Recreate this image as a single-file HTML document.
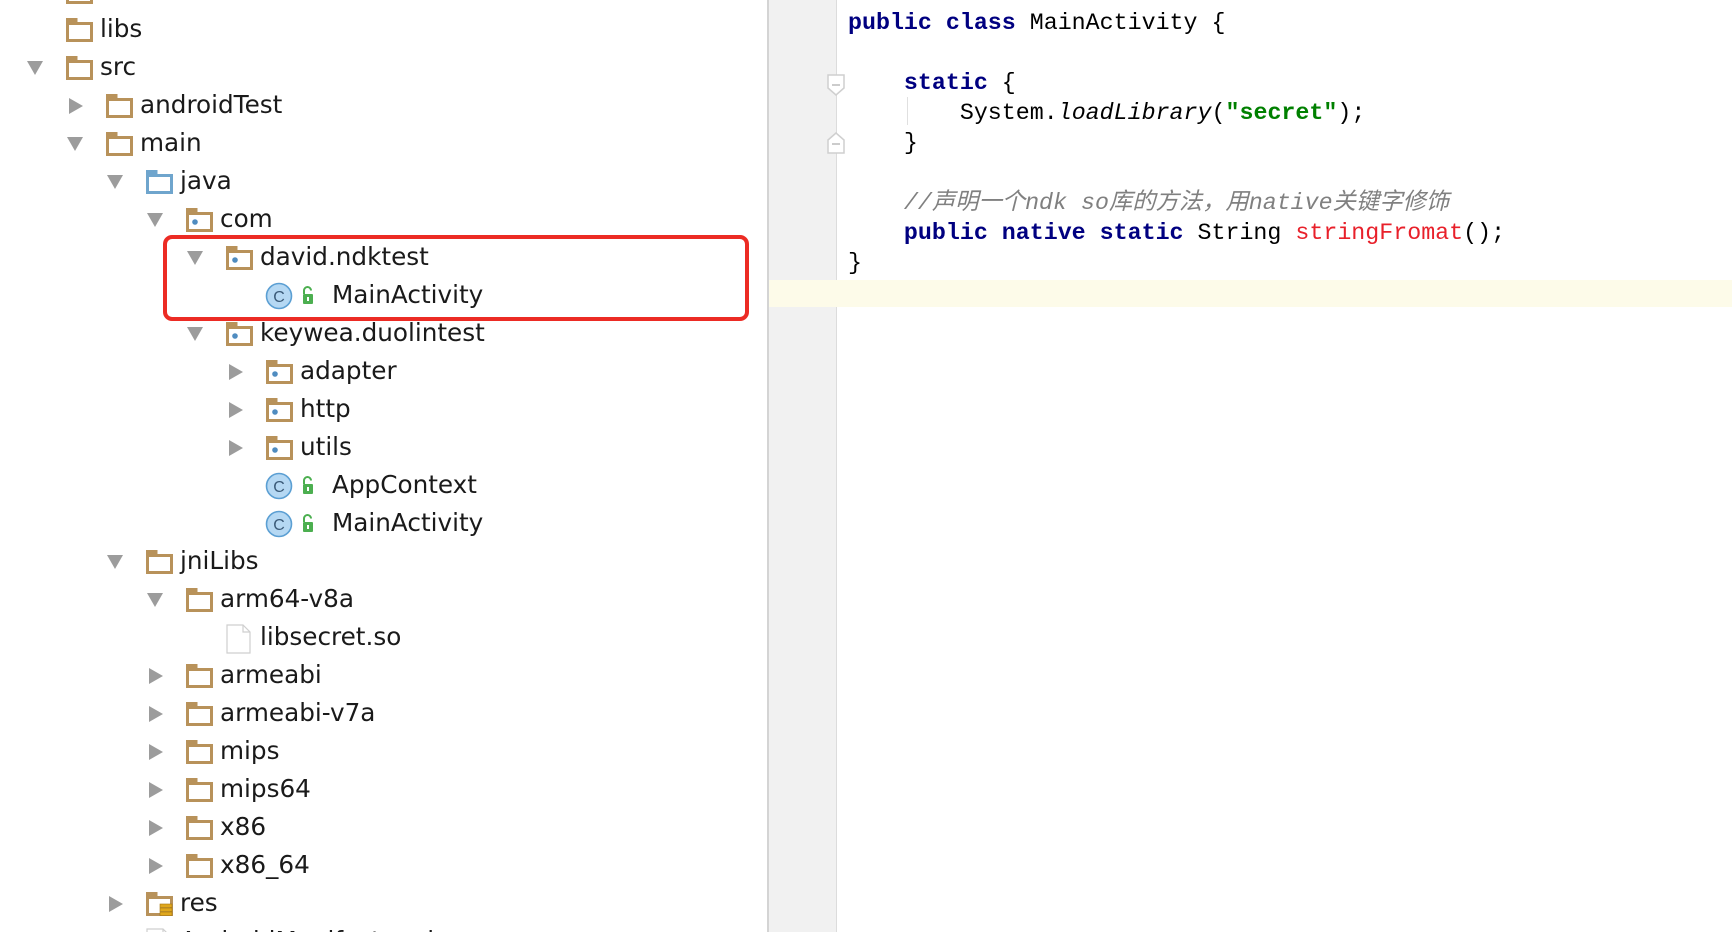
<!DOCTYPE html>
<html style="overflow:hidden"><head><meta charset="utf-8"><style>
html,body{margin:0;width:1732px;height:932px;overflow:hidden}
#w{position:relative;width:1732px;height:932px;overflow:hidden;background:#fff;font-family:"DejaVu Sans","Noto Sans CJK SC",sans-serif}
.r{position:absolute;height:38px;line-height:38px;font-size:24.7px;color:#1a1a1a;white-space:nowrap}
.t{position:absolute;width:0;height:0}
.t.o{border-left:8px solid transparent;border-right:8px solid transparent;border-top:14px solid #9c9c9c}
.t.c{border-top:8px solid transparent;border-bottom:8px solid transparent;border-left:14px solid #9c9c9c}
.ic{position:absolute}
.code{position:absolute;left:848px;font-family:"Liberation Mono","Noto Sans CJK SC",monospace;font-size:23.3px;white-space:pre;line-height:30px;color:#000}
.k{color:#000080;font-weight:bold}
.s{color:#008000;font-weight:bold}
.cm{color:#808080;font-style:italic}
.m{color:#e8202a}
</style></head><body><div id="w">
<div style="position:absolute;left:767px;top:0;width:2px;height:932px;background:#d4d4d4"></div>
<div style="position:absolute;left:769px;top:0;width:67px;height:932px;background:#f1f1f1"></div>
<div style="position:absolute;left:836px;top:0;width:1px;height:932px;background:#dcdcdc"></div>
<div style="position:absolute;left:769px;top:280px;width:963px;height:27px;background:#fdfbe9"></div>
<svg class="ic" style="left:827px;top:74px" width="18" height="22"><path d="M1 1H17V14L9 21L1 14Z" fill="#fff" stroke="#cfcfcf" stroke-width="1.5"/><path d="M5 11H13" stroke="#bbb" stroke-width="1.5"/></svg>
<svg class="ic" style="left:827px;top:132px" width="18" height="22"><path d="M1 21H17V8L9 1L1 8Z" fill="#fff" stroke="#cfcfcf" stroke-width="1.5"/><path d="M5 12H13" stroke="#bbb" stroke-width="1.5"/></svg>
<div style="position:absolute;left:907px;top:97px;width:1px;height:28px;background:#e0e0e0"></div>
<div class="code" style="top:8px"><span class="k">public class</span> MainActivity {</div>
<div class="code" style="top:68px">    <span class="k">static</span> {</div>
<div class="code" style="top:98px">        System.<i>loadLibrary</i>(<span class="s">"secret"</span>);</div>
<div class="code" style="top:128px">    }</div>
<div class="code" style="top:188px">    <span class="cm">//声明一个ndk so库的方法，用native关键字修饰</span></div>
<div class="code" style="top:218px">    <span class="k">public native static</span> String <span class="m">stringFromat</span>();</div>
<div class="code" style="top:248px">}</div>

<div style="position:absolute;left:163px;top:235px;width:578px;height:78px;border:4px solid #ec2b24;border-radius:9px"></div>

<div id="tree"></div>
</div>
<script>
var rows=[[-1,0,'f','',0],[0,0,'f','libs',0],[1,0,'f','src','o'],[2,1,'f','androidTest','c'],[3,1,'f','main','o'],[4,2,'j','java','o'],[5,3,'p','com','o'],[6,4,'p','david.ndktest','o'],[7,5,'C','MainActivity',0],[8,4,'p','keywea.duolintest','o'],[9,5,'p','adapter','c'],[10,5,'p','http','c'],[11,5,'p','utils','c'],[12,5,'C','AppContext',0],[13,5,'C','MainActivity',0],[14,2,'f','jniLibs','o'],[15,3,'f','arm64-v8a','o'],[16,4,'d','libsecret.so',0],[17,3,'f','armeabi','c'],[18,3,'f','armeabi-v7a','c'],[19,3,'f','mips','c'],[20,3,'f','mips64','c'],[21,3,'f','x86','c'],[22,3,'f','x86_64','c'],[23,2,'r','res','c'],[24,2,'d','AndroidManifest.xml','c']];
var h='';
rows.forEach(function(r){
var i=r[0],L=r[1],ty=r[2],cy=30+38*i,fx=66+40*L,tx=100+40*L;
if(r[4]=='o')h+='<div class="t o" style="left:'+(27+40*L)+'px;top:'+(cy-7)+'px"></div>';
if(r[4]=='c')h+='<div class="t c" style="left:'+(29+40*L)+'px;top:'+(cy-8)+'px"></div>';
var col=ty=='j'?'#6fa5cd':'#b8925a';
if(ty=='f'||ty=='p'||ty=='j'||ty=='r'){
h+='<svg class="ic" style="left:'+fx+'px;top:'+(cy-12)+'px" width="27" height="24"><path d="M1.5 22.5V1.5H10V5.5H25.5V22.5Z" fill="#fff" stroke="'+col+'" stroke-width="3"/><rect x="1" y="1" width="9" height="6" fill="'+col+'"/>'+(ty=='p'?'<circle cx="9" cy="14" r="2.8" fill="#4f8cc0"/>':'')+(ty=='r'?'<g fill="#e0a81e" stroke="#a57510" stroke-width=".6"><rect x="14" y="12" width="12" height="3.5"/><rect x="14" y="16" width="12" height="3.5"/><rect x="14" y="20" width="12" height="3.5"/></g>':'')+'</svg>';}
if(ty=='d')h+='<svg class="ic" style="left:'+fx+'px;top:'+(cy-14)+'px" width="26" height="30"><path d="M1 1H17L24 8V29H1Z" fill="#fff" stroke="#cfcfcf" stroke-width="1.2"/><path d="M17 1V8H24" fill="none" stroke="#cfcfcf" stroke-width="1.2"/></svg>';
if(ty=='C'){tx=332;
h+='<svg class="ic" style="left:265px;top:'+(cy-14)+'px" width="60" height="28"><circle cx="14" cy="14" r="12.5" fill="#b5d8f3" stroke="#5b9fd3" stroke-width="1.6"/><text x="14" y="20" font-family="Liberation Sans,sans-serif" font-size="16" text-anchor="middle" fill="#3a5a78">C</text><path d="M39 12V8.5A3.5 3.5 0 0 1 46 8.5" fill="none" stroke="#4caf50" stroke-width="2"/><rect x="38" y="12" width="10" height="10" rx="1" fill="#4caf50"/><rect x="42" y="15" width="2" height="4" fill="#fff"/></svg>';}
h+='<div class="r" style="left:'+tx+'px;top:'+(cy-20)+'px">'+r[3]+'</div>';
});
document.getElementById('tree').innerHTML=h;
</script>
</body></html>
